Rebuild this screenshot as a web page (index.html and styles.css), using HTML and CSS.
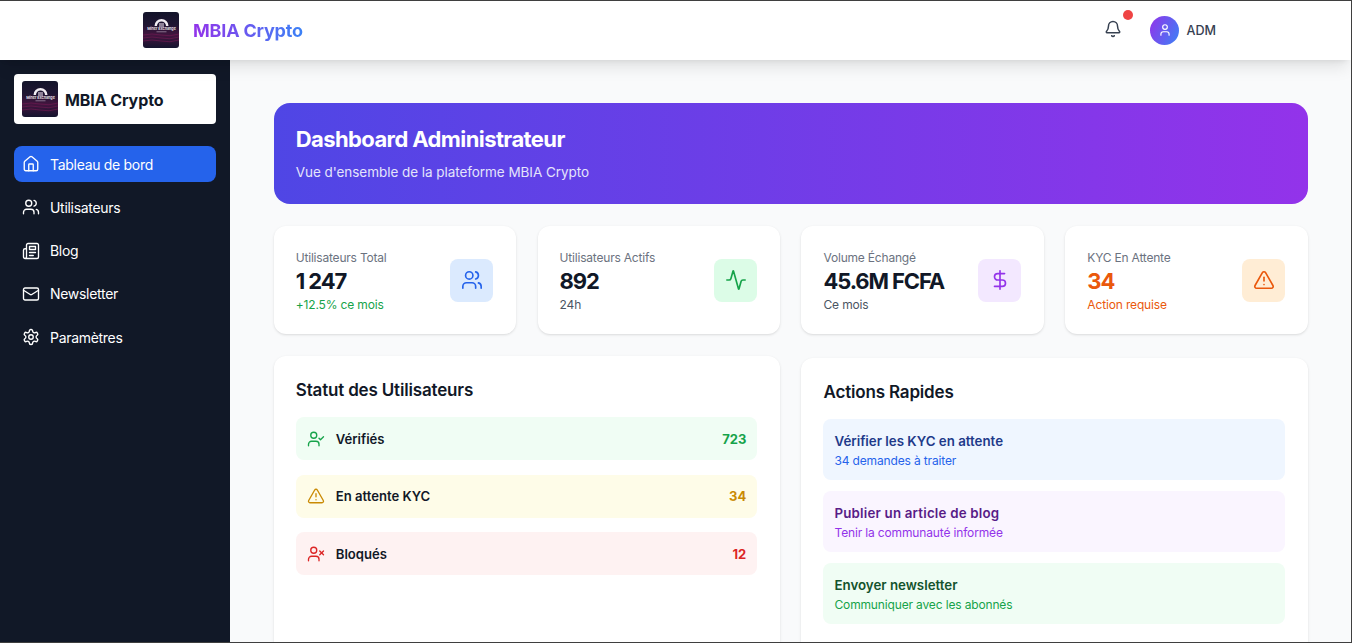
FILE: index.html
```html
<!DOCTYPE html>
<html lang="fr">
<head>
    <meta charset="UTF-8">
    <meta name="viewport" content="width=device-width, initial-scale=1.0">
    <title>MBIA Crypto - Dashboard Administrateur</title>
    <link rel="stylesheet" href="styles.css">
</head>
<body>
    <svg class="defs" width="0" height="0" aria-hidden="true">
        <defs>
            <linearGradient id="logo-bg" x1="0" y1="0" x2="0" y2="1">
                <stop offset="0" stop-color="#13142a"/>
                <stop offset="0.35" stop-color="#1f1532"/>
                <stop offset="0.65" stop-color="#43153f"/>
                <stop offset="1" stop-color="#14142e"/>
            </linearGradient>
            <symbol id="logo" viewBox="0 0 36 36">
                <rect width="36" height="36" rx="3" fill="url(#logo-bg)"/>
                <path d="M0 23q9-2 18 0t18-1M0 26q9-2 18 0t18-1M0 29q9-2 18 0t18-1" fill="none" stroke="#6d1a50" stroke-width="0.700"/>
                <path d="M11.500 14a7 7 0 0 1 14 0h-2.500a4.500 4.500 0 0 0-9 0z" fill="#f2edf2"/>
                <rect x="16" y="11" width="5" height="4" fill="#8f8298"/>
                <text x="18.500" y="17.800" class="logo-text">Miner Exchange</text>
                <rect x="13.500" y="19.500" width="10" height="0.700" fill="#a99ab0"/>
            </symbol>
        </defs>
    </svg>

    <header class="topbar">
        <div class="topbar-brand">
            <svg class="logo-img"><use href="#logo"/></svg>
            <span class="topbar-title">MBIA Crypto</span>
        </div>
        <div class="topbar-right">
            <button class="bell" aria-label="Notifications">
                <svg class="icon" viewBox="0 0 24 24"><path d="M10.268 21a2 2 0 0 0 3.464 0"/><path d="M3.262 15.326A1 1 0 0 0 4 17h16a1 1 0 0 0 .74-1.673C19.41 13.956 18 12.499 18 8A6 6 0 0 0 6 8c0 4.499-1.411 5.956-2.738 7.326"/></svg>
                <span class="bell-dot"></span>
            </button>
            <div class="avatar">
                <svg class="icon" viewBox="0 0 24 24"><path d="M19 21v-2a4 4 0 0 0-4-4H9a4 4 0 0 0-4 4v2"/><circle cx="12" cy="7" r="4"/></svg>
            </div>
            <span class="user-name">ADM</span>
        </div>
    </header>

    <div class="layout">
        <aside class="sidebar">
            <div class="side-brand">
                <svg class="logo-img"><use href="#logo"/></svg>
                <span class="side-title">MBIA Crypto</span>
            </div>
            <nav class="side-nav">
                <a class="nav-item active" href="#">
                    <svg class="icon" viewBox="0 0 24 24"><path d="M15 21v-8a1 1 0 0 0-1-1h-4a1 1 0 0 0-1 1v8"/><path d="M3 10a2 2 0 0 1 .709-1.528l7-5.999a2 2 0 0 1 2.582 0l7 5.999A2 2 0 0 1 21 10v9a2 2 0 0 1-2 2H5a2 2 0 0 1-2-2z"/></svg>
                    Tableau de bord
                </a>
                <a class="nav-item" href="#">
                    <svg class="icon" viewBox="0 0 24 24"><path d="M16 21v-2a4 4 0 0 0-4-4H6a4 4 0 0 0-4 4v2"/><circle cx="9" cy="7" r="4"/><path d="M22 21v-2a4 4 0 0 0-3-3.870"/><path d="M16 3.130a4 4 0 0 1 0 7.750"/></svg>
                    Utilisateurs
                </a>
                <a class="nav-item" href="#">
                    <svg class="icon" viewBox="0 0 24 24"><path d="M4 22h16a2 2 0 0 0 2-2V4a2 2 0 0 0-2-2H8a2 2 0 0 0-2 2v16a2 2 0 0 1-2 2Zm0 0a2 2 0 0 1-2-2v-9c0-1.100.9-2 2-2h2"/><path d="M18 14h-8"/><path d="M15 18h-5"/><path d="M10 6h8v4h-8V6Z"/></svg>
                    Blog
                </a>
                <a class="nav-item" href="#">
                    <svg class="icon" viewBox="0 0 24 24"><rect width="20" height="16" x="2" y="4" rx="2"/><path d="m22 7-8.970 5.700a1.940 1.940 0 0 1-2.060 0L2 7"/></svg>
                    Newsletter
                </a>
                <a class="nav-item" href="#">
                    <svg class="icon" viewBox="0 0 24 24"><path d="M12.220 2h-.440a2 2 0 0 0-2 2v.180a2 2 0 0 1-1 1.730l-.430.250a2 2 0 0 1-2 0l-.150-.080a2 2 0 0 0-2.730.730l-.220.380a2 2 0 0 0 .730 2.730l.150.100a2 2 0 0 1 1 1.720v.510a2 2 0 0 1-1 1.740l-.150.090a2 2 0 0 0-.730 2.730l.220.380a2 2 0 0 0 2.730.730l.150-.080a2 2 0 0 1 2 0l.430.250a2 2 0 0 1 1 1.730V20a2 2 0 0 0 2 2h.440a2 2 0 0 0 2-2v-.180a2 2 0 0 1 1-1.730l.430-.250a2 2 0 0 1 2 0l.150.080a2 2 0 0 0 2.730-.730l.220-.390a2 2 0 0 0-.730-2.730l-.150-.080a2 2 0 0 1-1-1.740v-.500a2 2 0 0 1 1-1.740l.150-.090a2 2 0 0 0 .730-2.730l-.220-.380a2 2 0 0 0-2.730-.730l-.150.080a2 2 0 0 1-2 0l-.430-.250a2 2 0 0 1-1-1.730V4a2 2 0 0 0-2-2z"/><circle cx="12" cy="12" r="3"/></svg>
                    Paramètres
                </a>
            </nav>
        </aside>

        <main class="content">
            <section class="hero">
                <h1>Dashboard Administrateur</h1>
                <p>Vue d'ensemble de la plateforme MBIA Crypto</p>
            </section>

            <section class="stats">
                <div class="stat-card">
                    <div class="stat-text">
                        <p class="stat-label">Utilisateurs Total</p>
                        <p class="stat-value">1 247</p>
                        <p class="stat-note green">+12.5% ce mois</p>
                    </div>
                    <div class="stat-icon bg-blue">
                        <svg class="icon" viewBox="0 0 24 24"><path d="M16 21v-2a4 4 0 0 0-4-4H6a4 4 0 0 0-4 4v2"/><circle cx="9" cy="7" r="4"/><path d="M22 21v-2a4 4 0 0 0-3-3.870"/><path d="M16 3.130a4 4 0 0 1 0 7.750"/></svg>
                    </div>
                </div>
                <div class="stat-card">
                    <div class="stat-text">
                        <p class="stat-label">Utilisateurs Actifs</p>
                        <p class="stat-value">892</p>
                        <p class="stat-note">24h</p>
                    </div>
                    <div class="stat-icon bg-green">
                        <svg class="icon" viewBox="0 0 24 24"><path d="M22 12h-2.480a2 2 0 0 0-1.930 1.460l-2.350 8.360a.250.250 0 0 1-.480 0L9.240 2.180a.250.250 0 0 0-.480 0l-2.350 8.360A2 2 0 0 1 4.490 12H2"/></svg>
                    </div>
                </div>
                <div class="stat-card">
                    <div class="stat-text">
                        <p class="stat-label">Volume Échangé</p>
                        <p class="stat-value">45.6M FCFA</p>
                        <p class="stat-note">Ce mois</p>
                    </div>
                    <div class="stat-icon bg-purple">
                        <svg class="icon" viewBox="0 0 24 24"><line x1="12" x2="12" y1="2" y2="22"/><path d="M17 5H9.500a3.500 3.500 0 0 0 0 7h5a3.500 3.500 0 0 1 0 7H6"/></svg>
                    </div>
                </div>
                <div class="stat-card">
                    <div class="stat-text">
                        <p class="stat-label">KYC En Attente</p>
                        <p class="stat-value orange">34</p>
                        <p class="stat-note orange">Action requise</p>
                    </div>
                    <div class="stat-icon bg-orange">
                        <svg class="icon" viewBox="0 0 24 24"><path d="m21.730 18-8-14a2 2 0 0 0-3.480 0l-8 14A2 2 0 0 0 4 21h16a2 2 0 0 0 1.730-3"/><path d="M12 9v4"/><path d="M12 17h.010"/></svg>
                    </div>
                </div>
            </section>

            <section class="panels">
                <div class="panel">
                    <h2>Statut des Utilisateurs</h2>
                    <div class="status-list">
                        <div class="status-row row-green">
                            <svg class="icon" viewBox="0 0 24 24"><path d="M16 21v-2a4 4 0 0 0-4-4H6a4 4 0 0 0-4 4v2"/><circle cx="9" cy="7" r="4"/><path d="m16 11 2 2 4-4"/></svg>
                            <span class="status-name">Vérifiés</span>
                            <span class="status-count">723</span>
                        </div>
                        <div class="status-row row-yellow">
                            <svg class="icon" viewBox="0 0 24 24"><path d="m21.730 18-8-14a2 2 0 0 0-3.480 0l-8 14A2 2 0 0 0 4 21h16a2 2 0 0 0 1.730-3"/><path d="M12 9v4"/><path d="M12 17h.010"/></svg>
                            <span class="status-name">En attente KYC</span>
                            <span class="status-count">34</span>
                        </div>
                        <div class="status-row row-red">
                            <svg class="icon" viewBox="0 0 24 24"><path d="M16 21v-2a4 4 0 0 0-4-4H6a4 4 0 0 0-4 4v2"/><circle cx="9" cy="7" r="4"/><line x1="17" x2="22" y1="8" y2="13"/><line x1="22" x2="17" y1="8" y2="13"/></svg>
                            <span class="status-name">Bloqués</span>
                            <span class="status-count">12</span>
                        </div>
                    </div>
                </div>

                <div class="panel panel-actions">
                    <h2>Actions Rapides</h2>
                    <div class="action-list">
                        <a class="action action-blue" href="#">
                            <strong>Vérifier les KYC en attente</strong>
                            <span>34 demandes à traiter</span>
                        </a>
                        <a class="action action-purple" href="#">
                            <strong>Publier un article de blog</strong>
                            <span>Tenir la communauté informée</span>
                        </a>
                        <a class="action action-green" href="#">
                            <strong>Envoyer newsletter</strong>
                            <span>Communiquer avec les abonnés</span>
                        </a>
                    </div>
                </div>
            </section>
        </main>
    </div>
</body>
</html>
```

FILE: styles.css
```css
* {
    margin: 0;
    padding: 0;
    box-sizing: border-box;
}

html, body {
    height: 100%;
    overflow: hidden;
}

body {
    font-family: Inter, 'Noto Sans', sans-serif;
    background: #f9fafb;
    color: #111827;
    border-top: 1px solid #3f3f3f;
    border-right: 1px solid #3f3f3f;
    border-bottom: 1px solid #3f3f3f;
    display: flex;
    flex-direction: column;
}

a {
    text-decoration: none;
}

.defs {
    position: absolute;
}

.logo-text {
    font-family: Inter, sans-serif;
    font-size: 3.7px;
    font-weight: 600;
    fill: #f2edf2;
    text-anchor: middle;
}

.icon {
    width: 20px;
    height: 20px;
    fill: none;
    stroke: currentColor;
    stroke-width: 2;
    stroke-linecap: round;
    stroke-linejoin: round;
    flex-shrink: 0;
}

.logo-img {
    width: 36px;
    height: 36px;
    flex-shrink: 0;
}

/* top bar */
.topbar {
    height: 59px;
    flex-shrink: 0;
    background: #fff;
    box-shadow: 0 10px 15px -3px rgba(0, 0, 0, 0.1), 0 4px 6px -4px rgba(0, 0, 0, 0.1);
    display: flex;
    align-items: center;
    justify-content: space-between;
    padding: 0 135px 1px 143px;
    position: relative;
    z-index: 2;
}

.topbar-brand {
    display: flex;
    align-items: center;
    gap: 14px;
}

.topbar-title {
    font-size: 18px;
    font-weight: 700;
    letter-spacing: -0.2px;
    background: linear-gradient(90deg, #9333ea, #3b82f6);
    -webkit-background-clip: text;
    background-clip: text;
    color: transparent;
}

.topbar-right {
    display: flex;
    align-items: center;
}

.bell {
    position: relative;
    background: none;
    border: 0;
    color: #374151;
    width: 20px;
    height: 20px;
    margin-right: 27px;
}

.bell .icon {
    width: 18px;
    height: 18px;
}

.bell-dot {
    position: absolute;
    top: -10px;
    right: -10px;
    width: 10px;
    height: 10px;
    border-radius: 50%;
    background: #ef4444;
}

.avatar {
    width: 29px;
    height: 29px;
    border-radius: 50%;
    background: linear-gradient(115deg, #9333ea, #3b82f6);
    color: #fff;
    display: flex;
    align-items: center;
    justify-content: center;
    margin-right: 7px;
}

.avatar .icon {
    width: 14px;
    height: 14px;
}

.user-name {
    font-size: 12.600px;
    font-weight: 500;
    color: #374151;
}

/* sidebar */
.layout {
    flex: 1;
    display: flex;
    min-height: 0;
}

.sidebar {
    width: 230px;
    flex-shrink: 0;
    background: #111827;
    padding: 14px 14px 0;
}

.side-brand {
    height: 50px;
    background: #fff;
    border-radius: 4px;
    display: flex;
    align-items: center;
    gap: 7px;
    padding: 0 8px;
    font-size: 16px;
    font-weight: 700;
    color: #111827;
}

.side-title {
    padding-top: 2px;
    letter-spacing: -0.1px;
}

.side-nav {
    margin-top: 22px;
    display: flex;
    flex-direction: column;
    gap: 7.300px;
}

.nav-item {
    height: 36px;
    display: flex;
    align-items: center;
    gap: 10px;
    padding: 0 8px;
    border-radius: 8px;
    color: #fff;
    font-size: 14px;
    font-weight: 400;
    letter-spacing: -0.3px;
}

.nav-item .icon {
    width: 18px;
    height: 18px;
    stroke-width: 1.8;
}

.nav-item.active {
    background: #2563eb;
}

/* main */
.content {
    flex: 1;
    min-width: 0;
    padding: 43px 43px 0 43.750px;
    overflow: hidden;
}

.hero {
    height: 101px;
    border-radius: 16px;
    background: linear-gradient(90deg, #4f46e5, #9333ea);
    color: #fff;
    padding: 22px 22px 0;
}

.hero h1 {
    font-size: 22px;
    font-weight: 700;
    line-height: 28px;
    letter-spacing: -0.6px;
}

.hero p {
    margin-top: 9px;
    font-size: 13.500px;
    line-height: 20px;
    letter-spacing: -0.05px;
    color: #e4e4fb;
}

.stats {
    display: grid;
    grid-template-columns: repeat(4, 1fr);
    gap: 21.200px;
    margin-top: 22px;
}

.stat-card {
    height: 108px;
    background: #fff;
    border-radius: 12px;
    box-shadow: 0 1px 3px rgba(0, 0, 0, 0.1), 0 1px 2px -1px rgba(0, 0, 0, 0.1);
    padding: 0 23px 0 22px;
    display: flex;
    align-items: center;
    justify-content: space-between;
}

.stat-text {
    padding-top: 3px;
}

.stat-label {
    font-size: 12px;
    line-height: 18px;
    letter-spacing: -0.2px;
    color: #6b7280;
}

.stat-value {
    font-size: 22px;
    font-weight: 700;
    line-height: 28px;
    letter-spacing: -1.1px;
    color: #111827;
}

.stat-note {
    margin-top: 1px;
    font-size: 12px;
    line-height: 18px;
    letter-spacing: -0.15px;
    color: #4b5563;
}

.stat-note.green {
    color: #16a34a;
}

.stat-value.orange,
.stat-note.orange {
    color: #ea580c;
}

.stat-icon {
    width: 43px;
    height: 43px;
    border-radius: 8px;
    display: flex;
    align-items: center;
    justify-content: center;
}

.stat-icon .icon {
    width: 22px;
    height: 22px;
    stroke-width: 1.8;
}

.bg-blue { background: #dbeafe; color: #2563eb; }
.bg-green { background: #dcfce7; color: #16a34a; }
.bg-purple { background: #f3e8ff; color: #9333ea; }
.bg-orange { background: #ffedd5; color: #ea580c; }

.panels {
    display: grid;
    grid-template-columns: 1fr 1fr;
    gap: 21.200px;
    margin-top: 22px;
}

.panel {
    height: 320px;
    background: #fff;
    border-radius: 12px;
    box-shadow: 0 1px 3px rgba(0, 0, 0, 0.1), 0 1px 2px -1px rgba(0, 0, 0, 0.1);
    padding: 22px 23px 22px 22px;
}

.panel-actions {
    margin-top: 2px;
}

.panel h2 {
    font-size: 17px;
    font-weight: 600;
    line-height: 24px;
    letter-spacing: -0.17px;
    color: #111827;
}

.status-list {
    margin-top: 15px;
    display: flex;
    flex-direction: column;
    gap: 14.500px;
}

.status-row {
    height: 43px;
    border-radius: 8px;
    display: flex;
    align-items: center;
    padding: 0 11px;
}

.status-row .icon {
    width: 18px;
    height: 18px;
    stroke-width: 1.8;
}

.status-name {
    margin-left: 11px;
    font-size: 13.100px;
    font-weight: 600;
    color: #111827;
}

.status-count {
    margin-left: auto;
    font-size: 13px;
    font-weight: 700;
}

.row-green { background: #f0fdf4; color: #16a34a; }
.row-yellow { background: #fefce8; color: #ca8a04; }
.row-red { background: #fef2f2; color: #dc2626; }

.action-list {
    margin-top: 15px;
    display: flex;
    flex-direction: column;
    gap: 11px;
}

.action {
    height: 61px;
    border-radius: 8px;
    padding: 2px 11px 0;
    display: flex;
    flex-direction: column;
    justify-content: center;
}

.action strong {
    font-size: 13.300px;
    font-weight: 600;
    line-height: 20px;
}

.action span {
    margin-top: 1px;
    font-size: 12px;
    line-height: 18px;
    letter-spacing: -0.15px;
}

.action-blue { background: #eff6ff; }
.action-blue strong { color: #1e3a8a; }
.action-blue span { color: #2563eb; }

.action-purple { background: #faf5ff; }
.action-purple strong { color: #581c87; letter-spacing: 0.2px; }
.action-purple span { color: #9333ea; }

.action-green { background: #f0fdf4; }
.action-green strong { color: #14532d; }
.action-green span { color: #16a34a; }
```
